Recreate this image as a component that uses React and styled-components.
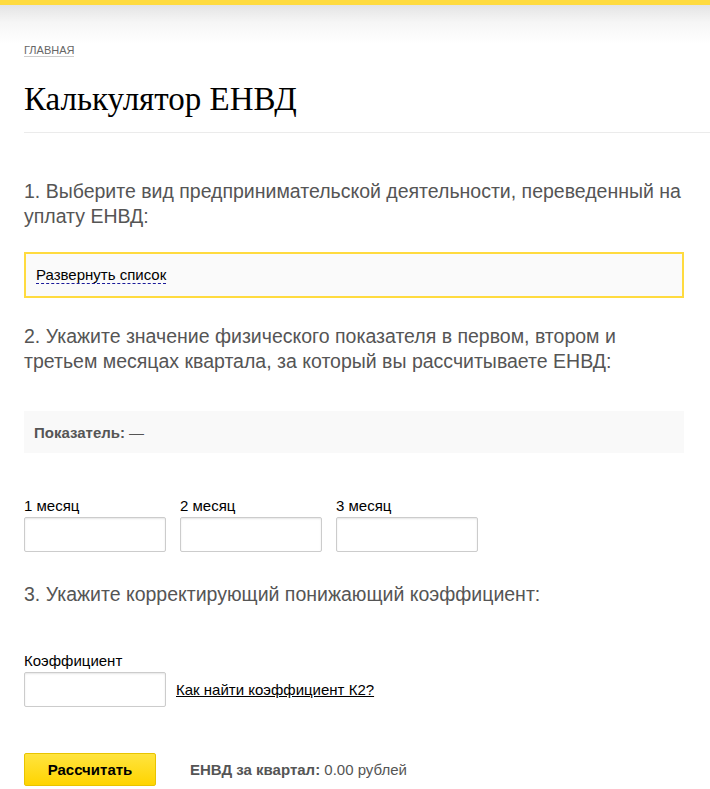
import React from 'react'
import styled, { createGlobalStyle } from 'styled-components'

const GlobalStyle = createGlobalStyle`
  html, body {
    margin: 0;
    padding: 0;
    background: #fff;
    font-family: "Liberation Sans", Arial, sans-serif;
    color: #000;
  }
  * { box-sizing: border-box; }
`

const App = () => {
  return (
    <>
      <GlobalStyle />
      <TopBar />
      <Page>
        <Crumbs>
          <a href="#">ГЛАВНАЯ</a>
        </Crumbs>
        <Title>Калькулятор ЕНВД</Title>
        <Rule />

        <StepTitle $top={46}>
          1. Выберите вид предпринимательской деятельности, переведенный на уплату ЕНВД:
        </StepTitle>
        <Dropdown>
          <DashedLink>Развернуть список</DashedLink>
        </Dropdown>

        <StepTitle $top={26}>
          2. Укажите значение физического показателя в первом, втором и третьем месяцах квартала, за который вы рассчитываете ЕНВД:
        </StepTitle>
        <InfoBox>
          <b>Показатель:</b> —
        </InfoBox>

        <Months>
          {['1 месяц', '2 месяц', '3 месяц'].map((m) => (
            <Field key={m}>
              <Label>{m}</Label>
              <Input type="text" />
            </Field>
          ))}
        </Months>

        <StepTitle $top={30}>3. Укажите корректирующий понижающий коэффициент:</StepTitle>

        <CoefBlock>
          <Label>Коэффициент</Label>
          <CoefRow>
            <Input type="text" />
            <HelpLink href="#">Как найти коэффициент К2?</HelpLink>
          </CoefRow>
        </CoefBlock>

        <Footer>
          <Button>Рассчитать</Button>
          <Result>
            <b>ЕНВД за квартал:</b> 0.00 рублей
          </Result>
        </Footer>
      </Page>
    </>
  )
}

const TopBar = styled.div`
  height: 44px;
  border-top: 5px solid #ffdb3f;
  background: linear-gradient(to bottom, #e4e4e4 0%, #f6f6f6 45%, #fff 100%);
`

const Page = styled.div`
  padding: 0 26px 0 24px;
`

const Crumbs = styled.div`
  font-size: 11px;
  line-height: 13px;
  a {
    color: #666;
    text-decoration: none;
    border-bottom: 1px solid #ccc;
  }
`

const Title = styled.h1`
  margin: 22px 0 0;
  font-family: "Liberation Serif", "Times New Roman", serif;
  font-weight: normal;
  font-size: 33px;
  line-height: 40px;
  color: #000;
`

const Rule = styled.div`
  margin: 13px -26px 0 0;
  height: 1px;
  background: #ebebeb;
`

const StepTitle = styled.div`
  margin-top: ${(p) => p.$top}px;
  font-size: 19.5px;
  line-height: 25px;
  color: #555;
`

const Dropdown = styled.div`
  margin-top: 23px;
  height: 46px;
  border: 2px solid #ffdb3f;
  background: #fafafa;
  padding: 11px 10px 0;
`

const DashedLink = styled.span`
  font-size: 15px;
  line-height: 19px;
  color: #000;
  border-bottom: 1px dashed #1a1a9a;
  cursor: pointer;
`

const InfoBox = styled.div`
  margin-top: 37px;
  height: 42px;
  background: #f9f9f9;
  padding: 0 10px;
  display: flex;
  align-items: center;
  font-size: 15px;
  color: #555;
  b {
    margin-right: 4px;
  }
`

const Months = styled.div`
  margin-top: 44px;
  display: flex;
  gap: 14px;
`

const Field = styled.div`
  display: flex;
  flex-direction: column;
`

const Label = styled.div`
  font-size: 15px;
  line-height: 18px;
  margin-bottom: 2px;
  color: #000;
`

const Input = styled.input`
  width: 142px;
  height: 35px;
  border: 1px solid #ccc;
  border-radius: 2px;
  box-shadow: inset 0 1px 2px rgba(0, 0, 0, 0.1);
  background: #fff;
  outline: none;
`

const CoefBlock = styled.div`
  margin-top: 45px;
`

const CoefRow = styled.div`
  display: flex;
  align-items: center;
  gap: 10px;
`

const HelpLink = styled.a`
  font-size: 15px;
  color: #000;
  text-decoration: underline;
`

const Footer = styled.div`
  margin-top: 46px;
  display: flex;
  align-items: center;
  gap: 34px;
`

const Button = styled.button`
  width: 132px;
  height: 33px;
  border: 1px solid #e8c400;
  border-radius: 2px;
  background: linear-gradient(to bottom, #ffe43f 0%, #ffd400 100%);
  font-family: "Liberation Sans", Arial, sans-serif;
  font-weight: bold;
  font-size: 15px;
  color: #000;
  cursor: pointer;
`

const Result = styled.div`
  font-size: 15px;
  color: #555;
`

export default App
